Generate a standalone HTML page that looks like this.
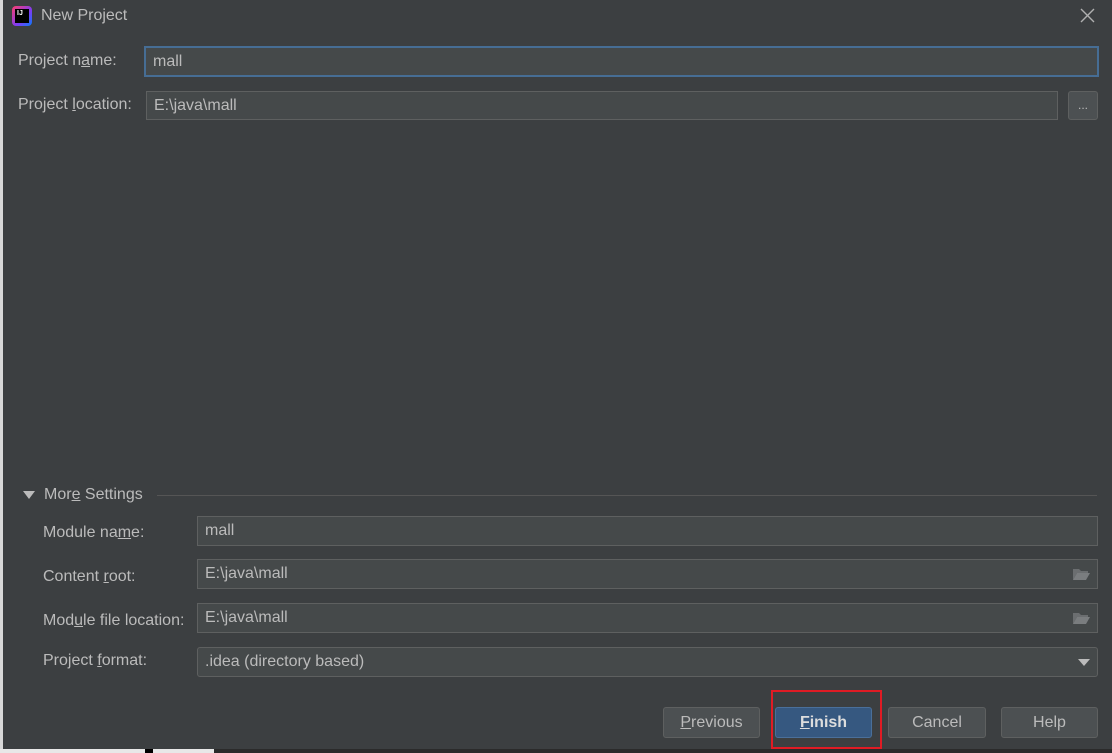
<!DOCTYPE html>
<html><head><style>
*{margin:0;padding:0;box-sizing:border-box}
body{width:1112px;height:753px;background:#3c3f41;position:relative;overflow:hidden;font-family:"Liberation Sans","Noto Sans CJK SC",sans-serif;font-size:16px;color:#bbbbbb}
.a{position:absolute}
.f{position:absolute;background:#45494a;border:1px solid #5e6060;color:#bbbbbb;padding-left:7px;display:flex;align-items:center;font-size:16px}
.l{position:absolute;font-size:16px;color:#bbbbbb}
.b{position:absolute;top:707px;height:31px;border:1px solid #5e6060;background:#4c5052;border-radius:3px;color:#bbbbbb;display:flex;align-items:center;justify-content:center;font-size:16px}
u{text-decoration:underline}
</style></head><body>
<div class="a" style="left:0;top:0;width:3px;height:753px;background:#d8d8d8"></div>
<div class="a" style="left:0;top:749px;width:1112px;height:4px;background:#e8e8e8"></div>
<div class="a" style="left:145px;top:749px;width:8px;height:4px;background:#000"></div>
<div class="a" style="left:214px;top:749px;width:900px;height:4px;background:#2b2b2b"></div>
<div class="a" style="left:12px;top:6px;width:20px;height:20px;border-radius:4px;background:linear-gradient(135deg,#ff3e6c,#7b3cf5 60%,#087cfa)"></div>
<div class="a" style="left:15px;top:9px;width:14px;height:14px;background:#000;color:#fff;font-size:7px;font-weight:bold;padding-left:2px;line-height:9px">IJ</div>
<div class="l" style="left:41px;top:7px;font-size:16px">New Project</div>
<svg class="a" style="left:1080px;top:8px" width="15" height="15"><path d="M1 1L14 14M14 1L1 14" stroke="#b0b0b0" stroke-width="1.4"/></svg>
<div class="l" style="left:18px;top:52px">Project n<u>a</u>me:</div>
<div class="f" style="left:144px;top:46px;width:955px;height:31px;border:2px solid #466d94">mall</div>
<div class="l" style="left:18px;top:96px">Project <u>l</u>ocation:</div>
<div class="f" style="left:146px;top:91px;width:912px;height:29px">E:\java\mall</div>
<div class="a" style="left:1068px;top:91px;width:30px;height:29px;border:1px solid #5e6060;background:#4c5052;border-radius:3px;color:#bbb;text-align:center;font-size:12px;line-height:26px">...</div>
<div class="a" style="left:23px;top:491px;width:0;height:0;border-left:6px solid transparent;border-right:6px solid transparent;border-top:8px solid #bbb"></div>
<div class="l" style="left:44px;top:486px">Mor<u>e</u> Settings</div>
<div class="a" style="left:157px;top:495px;width:940px;height:1px;background:#555"></div>
<div class="l" style="left:43px;top:524px">Module na<u>m</u>e:</div>
<div class="f" style="left:197px;top:516px;width:901px;height:30px">mall</div>
<div class="l" style="left:43px;top:568px">Content <u>r</u>oot:</div>
<div class="f" style="left:197px;top:559px;width:901px;height:30px">E:\java\mall</div>
<div class="l" style="left:43px;top:612px">Mod<u>u</u>le file location:</div>
<div class="f" style="left:197px;top:603px;width:901px;height:30px">E:\java\mall</div>
<svg class="a" style="left:1072px;top:567px" width="18" height="14"><path d="M1 2h6l2 2h7v2H5L1 13z" fill="#6b6e70"/><path d="M5 6h13l-4 7H1z" fill="#7a7d7f"/></svg>
<svg class="a" style="left:1072px;top:611px" width="18" height="14"><path d="M1 2h6l2 2h7v2H5L1 13z" fill="#6b6e70"/><path d="M5 6h13l-4 7H1z" fill="#7a7d7f"/></svg>
<div class="l" style="left:43px;top:652px">Project <u>f</u>ormat:</div>
<div class="f" style="left:197px;top:647px;width:901px;height:30px;border-radius:3px">.idea (directory based)</div>
<div class="a" style="left:1078px;top:659px;width:0;height:0;border-left:6px solid transparent;border-right:6px solid transparent;border-top:7px solid #bbb"></div>
<div class="b" style="left:663px;width:97px"><u>P</u>revious</div>
<div class="b" style="left:775px;width:97px;background:#365880;border-color:#4a6f9a;color:#ddd;font-weight:bold"><u>F</u>inish</div>
<div class="a" style="left:771px;top:690px;width:111px;height:59px;border:2px solid #e01b24"></div>
<div class="b" style="left:888px;width:98px">Cancel</div>
<div class="b" style="left:1001px;width:97px">Help</div>
</body></html>
